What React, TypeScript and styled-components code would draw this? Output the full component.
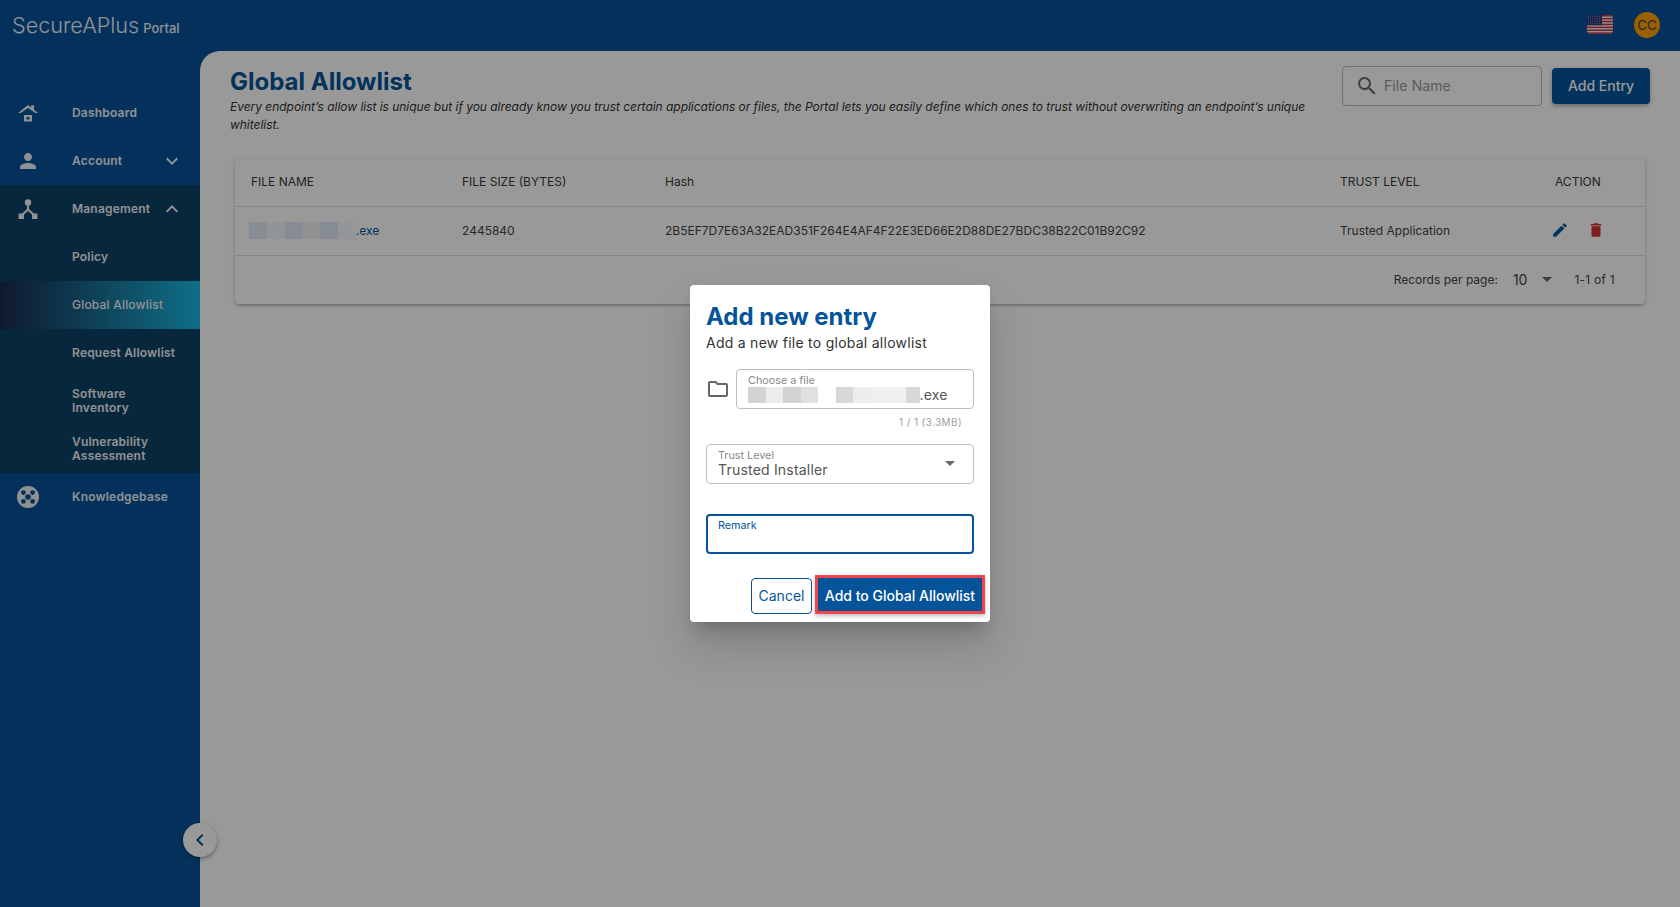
import React from "react";
import styled, { createGlobalStyle } from "styled-components";
import { MdPerson, MdKeyboardArrowDown, MdKeyboardArrowUp, MdEdit, MdDelete, MdSearch, MdOutlineFolder, MdArrowDropDown, MdChevronLeft } from "react-icons/md";

const Global = createGlobalStyle`
  html, body { margin: 0; padding: 0; height: 100%; }
  body { font-family: Inter, "Liberation Sans", sans-serif; background: #055399; overflow: hidden; }
  * { box-sizing: border-box; }
`;

const Shell = styled.div`
  position: relative;
  width: 100%;
  height: 100vh;
  display: flex;
  flex-direction: column;
  background: #055399;
  overflow: hidden;
`;
const TopBar = styled.header`
  height: 51px;
  flex: none;
  display: flex;
  align-items: center;
  justify-content: space-between;
  padding: 0 20px 2px 12px;
`;
const Brand = styled.div`
  display: flex;
  align-items: baseline;
  gap: 4px;
  color: #f0f2f5;
  padding-top: 1px;
`;
const BrandName = styled.span`
  font-size: 21.6px;
  font-weight: 300;
`;
const BrandSub = styled.span`
  font-size: 13px;
  font-weight: 500;
`;
const TopRight = styled.div`
  display: flex;
  align-items: center;
  gap: 21px;
`;
const Avatar = styled.div`
  width: 26px;
  height: 26px;
  border-radius: 50%;
  background: #ffa000;
  color: #444;
  font-size: 13.5px;
  display: flex;
  align-items: center;
  justify-content: center;
`;
const Body = styled.div`
  flex: 1;
  display: flex;
  min-height: 0;
`;
const Sidebar = styled.nav`
  width: 200px;
  flex: none;
  padding-top: 38px;
  color: #f0f2f5;
`;
const SubGroup = styled.div`
  background: #0d4166;
`;
const NavRow = styled.div<{ $active?: boolean }>`
  height: 48px;
  display: flex;
  align-items: center;
  font-size: 12px;
  line-height: 14px;
  font-weight: ${(p) => (p.$active ? 500 : 600)};
  letter-spacing: 0.2px;
  background: ${(p) => (p.$active ? "linear-gradient(90deg, #182a4d 0%, #19b9e1 100%)" : "transparent")};
`;
const NavIcon = styled.span`
  width: 72px;
  flex: none;
  display: flex;
  justify-content: center;
  padding-right: 16px;
`;
const NavLabel = styled.span`
  flex: 1;
`;
const NavCaret = styled.span`
  display: flex;
  padding-right: 16px;
`;
const Main = styled.main`
  flex: 1;
  min-width: 0;
  background: #fff;
  border-top-left-radius: 20px;
  padding: 15px 30px 0;
`;
const PageHead = styled.div`
  display: flex;
  align-items: flex-start;
`;
const HeadText = styled.div`
  width: 1100px;
  flex: none;
`;
const PageTitle = styled.h1`
  margin: 1px 0 0;
  font-size: 24px;
  line-height: 30px;
  font-weight: 700;
  color: #05549a;
`;
const PageDesc = styled.p`
  margin: 1px 0 0;
  font-size: 12px;
  line-height: 18px;
  font-style: italic;
  letter-spacing: -0.03px;
  color: #333;
  width: 1085px;
`;
const Search = styled.div`
  margin-left: 12px;
  width: 200px;
  height: 40px;
  border: 1px solid #bdbdbd;
  border-radius: 4px;
  display: flex;
  align-items: center;
  gap: 5px;
  padding: 0 0 1px 12px;
  font-size: 14px;
  letter-spacing: 0.1px;
  color: #9a9a9a;
`;
const PrimaryBtn = styled.button`
  margin: 2px 0 0 10px;
  height: 36px;
  width: 98px;
  border: 0;
  border-radius: 4px;
  padding: 0 0 2px;
  background: #05549a;
  color: #fff;
  font: 500 14px Inter, sans-serif;
  box-shadow: 0 2px 4px rgba(0, 0, 0, 0.3);
`;
const Card = styled.section`
  margin: 25px 5px 0;
  border-radius: 4px;
  background: #fff;
  box-shadow: 0 2px 3px -1px rgba(0, 0, 0, 0.3), 0 1px 5px rgba(0, 0, 0, 0.14);
  font-size: 12px;
  color: #444;
`;
const Row = styled.div<{ $h: number }>`
  display: grid;
  grid-template-columns: 211px 203px 675px 215px 106px;
  height: ${(p) => p.$h}px;
  padding-bottom: 2px;
  align-items: center;
  border-bottom: 1px solid rgba(0, 0, 0, 0.12);
`;
const Cell = styled.div<{ $head?: boolean }>`
  padding-left: 16px;
  white-space: nowrap;
  color: ${(p) => (p.$head ? "#3a3a3a" : "#444")};
`;
const MaskRow = styled.div`
  display: flex;
  align-items: center;
  margin-left: -2px;
`;
const Pix = styled.span<{ $c: string; $w: number; $h: number }>`
  display: inline-block;
  width: ${(p) => p.$w}px;
  height: ${(p) => p.$h}px;
  background: ${(p) => p.$c};
`;
const LinkText = styled.span`
  color: #05549a;
`;
const Actions = styled.div`
  padding-left: 12px;
  display: flex;
  align-items: center;
  gap: 18px;
`;
const Footer = styled.div`
  height: 48px;
  padding: 0 30px 2px 0;
  display: flex;
  align-items: center;
  justify-content: flex-end;
  color: #444;
`;
const PerPage = styled.span`
  margin-left: 15px;
  font-size: 14px;
  display: flex;
  align-items: center;
  gap: 8px;
`;
const Range = styled.span`
  margin-left: 15px;
  letter-spacing: 0.25px;
`;
const Scrim = styled.div`
  position: absolute;
  inset: 0;
  background: rgba(0, 0, 0, 0.4);
`;
const Collapse = styled.button`
  position: absolute;
  left: 183px;
  top: 823px;
  width: 34px;
  height: 34px;
  border-radius: 50%;
  border: 0;
  padding: 0;
  background: #fff;
  color: #05549a;
  display: flex;
  align-items: center;
  justify-content: center;
  box-shadow: 0 2px 4px rgba(0, 0, 0, 0.35);
`;
const Dialog = styled.div`
  position: absolute;
  left: 690px;
  top: 285px;
  width: 300px;
  height: 337px;
  background: #fff;
  border-radius: 4px;
  padding: 17px 16px 0;
  box-shadow: 0 11px 15px -7px rgba(0, 0, 0, 0.2), 0 24px 38px 3px rgba(0, 0, 0, 0.14);
`;
const DlgTitle = styled.h2`
  margin: 0;
  font-size: 24px;
  line-height: 30px;
  font-weight: 700;
  color: #05549a;
`;
const DlgSub = styled.p`
  margin: 0;
  font-size: 14px;
  line-height: 22px;
  letter-spacing: 0.26px;
  color: #333;
`;
const FileRow = styled.div`
  margin-top: 15px;
  display: flex;
  align-items: center;
  gap: 6px;
`;
const FolderIcon = styled.span`
  display: flex;
  color: #666;
`;
const Field = styled.div<{ $focus?: boolean }>`
  position: relative;
  flex: 1;
  height: 40px;
  border: ${(p) => (p.$focus ? "2px solid #05549a" : "1px solid #bdbdbd")};
  border-radius: 4px;
  padding: ${(p) => (p.$focus ? "4px 0 0 10px" : "5px 0 0 11px")};
`;
const FieldLabel = styled.div<{ $focus?: boolean }>`
  font-size: 10.8px;
  line-height: 11px;
  color: ${(p) => (p.$focus ? "#05549a" : "#8a8a8a")};
`;
const FieldValue = styled.div`
  display: flex;
  align-items: center;
  font-size: 14px;
  line-height: 18px;
  color: #555;
  letter-spacing: 0.2px;
`;
const Counter = styled.div`
  margin: 5px 12px 0 0;
  text-align: right;
  font-size: 10px;
  line-height: 16px;
  letter-spacing: 0.4px;
  color: #9e9e9e;
`;
const SelectWrap = styled.div`
  margin-top: 14px;
  display: flex;
`;
const RemarkWrap = styled.div`
  margin-top: 30px;
  display: flex;
`;
const Drop = styled.span`
  position: absolute;
  right: 11px;
  top: 6px;
  display: flex;
  color: #666;
`;
const DlgActions = styled.div`
  margin: 21px -11px 0 0;
  display: flex;
  justify-content: flex-end;
  align-items: flex-end;
  gap: 3px;
`;
const CancelBtn = styled.button`
  width: 61px;
  height: 36px;
  border: 1px solid #05549a;
  border-radius: 4px;
  background: #fff;
  color: #05549a;
  font: 400 14px Inter, sans-serif;
  padding: 0 0 2px;
`;
const ConfirmBtn = styled.button`
  width: 170px;
  height: 39px;
  border: 3px solid #f5434c;
  background: #05549a;
  color: #fff;
  font: 500 14px Inter, sans-serif;
  padding: 1px 0 0;
  box-shadow: 0 2px 4px rgba(0, 0, 0, 0.25);
`;

const HomeIcon = () => (
  <svg width="20" height="17" viewBox="0 0 20 17" fill="currentColor">
    <path d="M0 8 L10 0 L13 2.4 V0.3 H16 V4.8 L20 8 H17.4 L10 2.9 L2.6 8 Z" />
    <path fillRule="evenodd" d="M6 10 H14 V16.5 H6 Z M8.6 12 V14.5 H11.4 V12 Z" />
  </svg>
);
const TreeIcon = () => (
  <svg width="20" height="20" viewBox="0 0 20 20" fill="currentColor">
    <circle cx="10" cy="3.5" r="3.2" />
    <path d="M9 6 H11 V10 L16.5 15 L15 16.5 L10 12 L5 16.5 L3.5 15 L9 10 Z" />
    <rect x="0.5" y="14.5" width="5.5" height="5.5" />
    <rect x="14" y="14.5" width="5.5" height="5.5" />
  </svg>
);
const BuoyIcon = () => (
  <svg width="22" height="22" viewBox="0 0 22 22">
    <path
      fill="currentColor"
      fillRule="evenodd"
      d="M11 0a11 11 0 1 0 0 22a11 11 0 1 0 0-22Z
         M11 8.2a2.8 2.8 0 1 1 0 5.6a2.8 2.8 0 1 1 0-5.6Z
         M6.4 4.2a2.4 2.4 0 1 1 0 4.8a2.4 2.4 0 1 1 0-4.8Z
         M15.6 4.2a2.4 2.4 0 1 1 0 4.8a2.4 2.4 0 1 1 0-4.8Z
         M6.4 13a2.4 2.4 0 1 1 0 4.8a2.4 2.4 0 1 1 0-4.8Z
         M15.6 13a2.4 2.4 0 1 1 0 4.8a2.4 2.4 0 1 1 0-4.8Z"
    />
  </svg>
);
const Flag = () => (
  <svg width="26" height="19" viewBox="0 0 26 19">
    <defs>
      <clipPath id="flag-clip">
        <rect width="26" height="19" rx="4" />
      </clipPath>
    </defs>
    <g clipPath="url(#flag-clip)">
      <rect width="26" height="19" fill="#f4f4f4" />
      {[0, 2.9, 5.8, 8.7, 11.6, 14.5, 17.4].map((y) => (
        <rect key={y} y={y} width="26" height="1.5" fill="#c8313e" />
      ))}
      <rect width="15" height="10.2" fill="#2b3a7a" />
      {[1.8, 4, 6.2, 8.4].map((y) => (
        <path key={y} d={`M1 ${y}H14`} stroke="#8f97c0" strokeWidth="0.8" strokeDasharray="1 1.2" />
      ))}
    </g>
  </svg>
);

const tableMask = ["#e2ebf5", "#f4f7fa", "#deeaf5", "#eef2f6", "#deeaf5", "#f8fafc"];
const fileMask = [
  "#d3d3d3", "#ececec", "#d3d3d3", "#e0e0e0", "#ffffff", "#d8d8d8", "#ededed", "#f0f0f0", "#f0f0f0", "#d8d8d8",
];

export default function App() {
  return (
    <Shell>
      <Global />
      <TopBar>
        <Brand>
          <BrandName>SecureAPlus</BrandName>
          <BrandSub>Portal</BrandSub>
        </Brand>
        <TopRight>
          <Flag />
          <Avatar>CC</Avatar>
        </TopRight>
      </TopBar>
      <Body>
        <Sidebar>
          <NavRow>
            <NavIcon><HomeIcon /></NavIcon>
            <NavLabel>Dashboard</NavLabel>
          </NavRow>
          <NavRow>
            <NavIcon><MdPerson size={24} /></NavIcon>
            <NavLabel>Account</NavLabel>
            <NavCaret><MdKeyboardArrowDown size={24} /></NavCaret>
          </NavRow>
          <SubGroup>
            <NavRow>
              <NavIcon><TreeIcon /></NavIcon>
              <NavLabel>Management</NavLabel>
              <NavCaret><MdKeyboardArrowUp size={24} /></NavCaret>
            </NavRow>
            <NavRow>
              <NavIcon />
              <NavLabel>Policy</NavLabel>
            </NavRow>
            <NavRow $active>
              <NavIcon />
              <NavLabel>Global Allowlist</NavLabel>
            </NavRow>
            <NavRow>
              <NavIcon />
              <NavLabel>Request Allowlist</NavLabel>
            </NavRow>
            <NavRow>
              <NavIcon />
              <NavLabel>Software<br />Inventory</NavLabel>
            </NavRow>
            <NavRow>
              <NavIcon />
              <NavLabel>Vulnerability<br />Assessment</NavLabel>
            </NavRow>
          </SubGroup>
          <NavRow>
            <NavIcon><BuoyIcon /></NavIcon>
            <NavLabel>Knowledgebase</NavLabel>
          </NavRow>
        </Sidebar>
        <Main>
          <PageHead>
            <HeadText>
              <PageTitle>Global Allowlist</PageTitle>
              <PageDesc>
                Every endpoint’s allow list is unique but if you already know you trust certain applications or files, the Portal lets you easily define which ones to trust without overwriting an endpoint’s unique whitelist.
              </PageDesc>
            </HeadText>
            <Search>
              <MdSearch size={24} color="#666" />
              File Name
            </Search>
            <PrimaryBtn>Add Entry</PrimaryBtn>
          </PageHead>
          <Card>
            <Row $h={48}>
              <Cell $head>FILE NAME</Cell>
              <Cell $head>FILE SIZE (BYTES)</Cell>
              <Cell $head>Hash</Cell>
              <Cell $head>TRUST LEVEL</Cell>
              <Cell $head>ACTION</Cell>
            </Row>
            <Row $h={49}>
              <Cell>
                <MaskRow>
                  {tableMask.map((c, i) => (
                    <Pix key={i} $c={c} $w={17.8} $h={17} />
                  ))}
                  <LinkText>.exe</LinkText>
                </MaskRow>
              </Cell>
              <Cell>2445840</Cell>
              <Cell>2B5EF7D7E63A32EAD351F264E4AF4F22E3ED66E2D88DE27BDC38B22C01B92C92</Cell>
              <Cell>Trusted Application</Cell>
              <Actions>
                <MdEdit size={18} color="#05549a" />
                <MdDelete size={18} color="#d32f2f" />
              </Actions>
            </Row>
            <Footer>
              Records per page:
              <PerPage>10<MdArrowDropDown size={24} color="#666" /></PerPage>
              <Range>1-1 of 1</Range>
            </Footer>
          </Card>
        </Main>
      </Body>
      <Collapse><MdChevronLeft size={24} /></Collapse>
      <Scrim />
      <Dialog>
        <DlgTitle>Add new entry</DlgTitle>
        <DlgSub>Add a new file to global allowlist</DlgSub>
        <FileRow>
          <FolderIcon><MdOutlineFolder size={24} /></FolderIcon>
          <Field>
            <FieldLabel>Choose a file</FieldLabel>
            <FieldValue>
              {fileMask.map((c, i) => (
                <Pix key={i} $c={c} $w={i === 9 ? 14 : 17.5} $h={16} />
              ))}
              .exe
            </FieldValue>
          </Field>
        </FileRow>
        <Counter>1 / 1 (3.3MB)</Counter>
        <SelectWrap>
          <Field>
            <FieldLabel>Trust Level</FieldLabel>
            <FieldValue>Trusted Installer</FieldValue>
            <Drop><MdArrowDropDown size={24} /></Drop>
          </Field>
        </SelectWrap>
        <RemarkWrap>
          <Field $focus>
            <FieldLabel $focus>Remark</FieldLabel>
          </Field>
        </RemarkWrap>
        <DlgActions>
          <CancelBtn>Cancel</CancelBtn>
          <ConfirmBtn>Add to Global Allowlist</ConfirmBtn>
        </DlgActions>
      </Dialog>
    </Shell>
  );
}
